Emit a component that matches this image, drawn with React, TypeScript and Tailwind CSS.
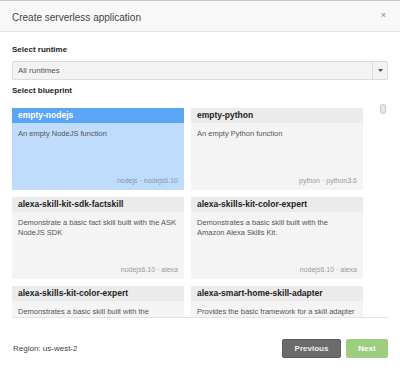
import React, { FC } from "react";

interface Blueprint {
    name: string;
    desc: string;
    tags: string;
}

const blueprints: Blueprint[] = [
    { name: "empty-nodejs", desc: "An empty NodeJS function", tags: "nodejs · nodejs6.10" },
    { name: "empty-python", desc: "An empty Python function", tags: "python · python3.6" },
    { name: "alexa-skill-kit-sdk-factskill", desc: "Demonstrate a basic fact skill built with the ASK NodeJS SDK", tags: "nodejs6.10 · alexa" },
    { name: "alexa-skills-kit-color-expert", desc: "Demonstrates a basic skill built with the Amazon Alexa Skills Kit.", tags: "nodejs6.10 · alexa" },
    { name: "alexa-skills-kit-color-expert", desc: "Demonstrates a basic skill built with the Amazon Alexa Skills Kit.", tags: "nodejs6.10 · alexa" },
    { name: "alexa-smart-home-skill-adapter", desc: "Provides the basic framework for a skill adapter for a smart home skill.", tags: "nodejs6.10 · alexa" },
];

const Card: FC<{ bp: Blueprint; selected?: boolean }> = ({ bp, selected }) => (
    <div className={`flex flex-col h-[82px] ${selected ? "bg-[#bfdcfd]" : "bg-[#f4f4f4]"}`}>
        {/* Header */}
        <div
            className={`h-[15px] shrink-0 px-[6px] flex items-center text-[8.5px] font-bold ${
                selected ? "bg-[#5ba5f7] text-white" : "bg-[#ebebeb] text-[#222]"
            }`}
        >
            {bp.name}
        </div>
        {/* Body */}
        <div className="flex-1 flex flex-col px-[6px] pt-[6px] pb-[5px]">
            <p className="text-[7.5px] leading-[10px] text-[#555]">{bp.desc}</p>
            <p className={`mt-auto text-right text-[7px] leading-[9px] ${selected ? "text-[#7f97b3]" : "text-[#9a9a9a]"}`}>
                {bp.tags}
            </p>
        </div>
    </div>
);

export default function App() {
    return (
        <div className="w-[400px] h-[368px] bg-white flex flex-col border-t border-[#c8c8c8] font-['Liberation_Sans',Arial,sans-serif] overflow-hidden">
            {/* Header */}
            <div className="h-[31px] shrink-0 bg-[#f8f8f8] border-b border-[#e6e6e6] flex items-center justify-between px-[12px]">
                <h1 className="text-[10px] text-[#444] pt-[2px]">Create serverless application</h1>
                <span className="text-[9px] text-[#888] pr-[2px]">×</span>
            </div>

            {/* Body */}
            <div className="px-[12px] flex flex-col">
                <div className="text-[8px] font-bold text-[#222] mt-[12px] leading-[12px]">Select runtime</div>
                <div className="mt-[5px] h-[19px] flex border border-[#dcdcdc] bg-[#f3f3f3] rounded-[2px]">
                    <div className="flex-1 flex items-center px-[5px] text-[8px] text-[#555]">All runtimes</div>
                    <div className="w-[15px] border-l border-[#dcdcdc] flex items-center justify-center">
                        <svg width="5" height="3" viewBox="0 0 5 3">
                            <path d="M0 0h5L2.5 3z" fill="#555" />
                        </svg>
                    </div>
                </div>
                <div className="text-[8px] font-bold text-[#222] mt-[5px] leading-[12px]">Select blueprint</div>

                {/* Blueprint list */}
                <div className="mt-[6px] h-[215px] border-b border-[#e3e3e3] flex overflow-hidden">
                    <div className="w-[351px] grid grid-cols-2 gap-x-[7px] gap-y-[7px] pt-[5px] content-start">
                        {blueprints.map((bp, i) => (
                            <Card key={i} bp={bp} selected={i === 0} />
                        ))}
                    </div>
                    <div className="flex-1 flex justify-end pr-[2px] pt-[1px]">
                        <div className="w-[6px] h-[10px] rounded-full border border-[#c4c4c4] bg-[#e8e8e8]" />
                    </div>
                </div>
            </div>

            {/* Footer */}
            <div className="mt-auto mb-[10px] px-[12px] flex items-center justify-between">
                <span className="text-[8px] text-[#444] pl-[1px]">Region: us-west-2</span>
                <div className="flex gap-[5px]">
                    <button className="w-[59px] h-[19px] rounded-[2px] bg-[#6b6b6b] border border-[#5a5a5a] text-[8px] font-bold text-[#eee]">
                        Previous
                    </button>
                    <button className="w-[42px] h-[19px] rounded-[2px] bg-[#9dce80] text-[8px] font-bold text-white">
                        Next
                    </button>
                </div>
            </div>
        </div>
    );
}
